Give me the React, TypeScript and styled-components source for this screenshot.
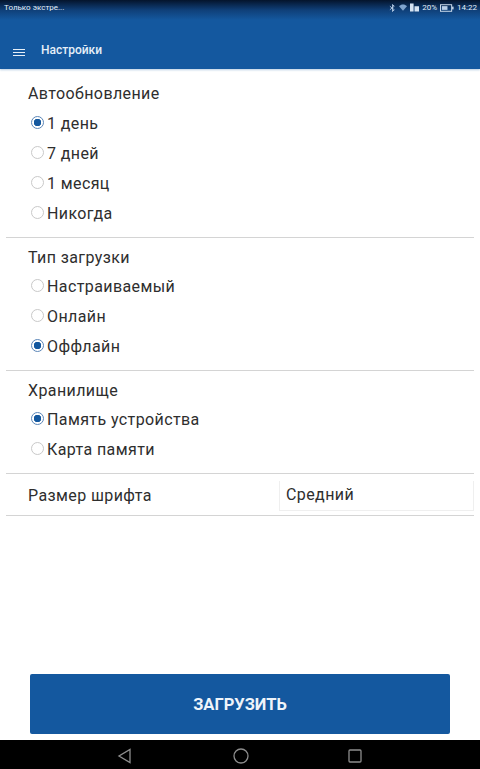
import styled, { createGlobalStyle } from 'styled-components';

const BLUE = '#14589f';

const GlobalStyle = createGlobalStyle`
  html, body {
    margin: 0;
    padding: 0;
    background: #fff;
  }
  * {
    box-sizing: border-box;
  }
`;

type Option = { label: string; checked?: boolean };

const SECTIONS: { title: string; options: Option[] }[] = [
  {
    title: 'Автообновление',
    options: [{ label: '1 день', checked: true }, { label: '7 дней' }, { label: '1 месяц' }, { label: 'Никогда' }],
  },
  {
    title: 'Тип загрузки',
    options: [{ label: 'Настраиваемый' }, { label: 'Онлайн' }, { label: 'Оффлайн', checked: true }],
  },
  {
    title: 'Хранилище',
    options: [{ label: 'Память устройства', checked: true }, { label: 'Карта памяти' }],
  },
];

const App = () => {
  return (
    <S.Page>
      <GlobalStyle />
      <S.Header>
        <S.StatusBar>
          <S.StatusText>Только экстре...</S.StatusText>
          <S.StatusRight>
            <svg width="7" height="10" viewBox="0 0 8 10" fill="none" stroke="#b9cfe8" strokeWidth="1">
              <path d="M1 3l5 4-2 2V1l2 2-5 4" />
            </svg>
            <svg width="8" height="7" viewBox="0 0 10 8" fill="#7fa3cc">
              <path d="M0 2.5C3-.5 7-.5 10 2.5L5 8z" />
            </svg>
            <svg width="9" height="9" viewBox="0 0 10 9" fill="#d5e3f2">
              <path d="M0 0h4v9H0zM5 3h5v6H5z" />
            </svg>
            <S.StatusText>20%</S.StatusText>
            <svg width="14" height="8" viewBox="0 0 15 8" fill="none">
              <rect x="0.5" y="0.5" width="12" height="7" stroke="#d5e3f2" />
              <rect x="2" y="2" width="6" height="4" fill="#b9cfe8" />
              <rect x="13" y="2.5" width="1.5" height="3" fill="#d5e3f2" />
            </svg>
            <S.StatusText>14:22</S.StatusText>
          </S.StatusRight>
        </S.StatusBar>
        <S.Toolbar>
          <S.Burger>
            <span />
            <span />
            <span />
          </S.Burger>
          <S.ToolbarTitle>Настройки</S.ToolbarTitle>
        </S.Toolbar>
      </S.Header>

      <S.Content>
        {SECTIONS.map((section) => (
          <S.Section key={section.title}>
            <S.Title>{section.title}</S.Title>
            {section.options.map((option) => (
              <S.RadioRow key={option.label}>
                <S.Radio $checked={option.checked} />
                <S.Label>{option.label}</S.Label>
              </S.RadioRow>
            ))}
          </S.Section>
        ))}
        <S.FontRow>
          <S.Label>Размер шрифта</S.Label>
          <S.Select>
            <S.Label>Средний</S.Label>
          </S.Select>
        </S.FontRow>
      </S.Content>

      <S.Footer>
        <S.LoadButton>ЗАГРУЗИТЬ</S.LoadButton>
      </S.Footer>

      <S.NavBar>
        <svg width="16" height="16" viewBox="0 0 16 16" fill="none" stroke="#8d8d8d" strokeWidth="1.3">
          <path d="M13 1.5v13L2 8z" />
        </svg>
        <svg width="16" height="16" viewBox="0 0 16 16" fill="none" stroke="#8d8d8d" strokeWidth="1.3">
          <circle cx="8" cy="8" r="7" />
        </svg>
        <svg width="14" height="14" viewBox="0 0 14 14" fill="none" stroke="#8d8d8d" strokeWidth="1.3">
          <rect x="1" y="1" width="12" height="12" rx="1" />
        </svg>
      </S.NavBar>
    </S.Page>
  );
};
export default App;

const S = {
  Page: styled.div`
    width: 480px;
    height: 769px;
    display: flex;
    flex-direction: column;
    background: #fff;
    font-family: Roboto, 'Liberation Sans', sans-serif;
    overflow: hidden;
  `,
  Header: styled.div`
    height: 69px;
    background: linear-gradient(180deg, #04142c 0px, #0f3f78 10px, ${BLUE} 20px);
    box-shadow: 0 1px 2px rgba(20, 88, 159, 0.3);
  `,
  StatusBar: styled.div`
    height: 16px;
    padding: 0 3px 1px 4px;
    display: flex;
    align-items: center;
    justify-content: space-between;
  `,
  StatusText: styled.span`
    font-size: 8px;
    color: #e4eef8;
  `,
  StatusRight: styled.div`
    display: flex;
    align-items: center;
    gap: 3px;
  `,
  Toolbar: styled.div`
    height: 53px;
    padding: 15px 0 0 13px;
    display: flex;
    align-items: center;
    gap: 16px;
  `,
  Burger: styled.div`
    width: 12px;
    margin-top: 5px;
    display: flex;
    flex-direction: column;
    gap: 1.5px;

    span {
      height: 1.5px;
      background: #e6eff8;
    }
  `,
  ToolbarTitle: styled.span`
    font-size: 12px;
    font-weight: 500;
    color: #e6eff8;
  `,
  Content: styled.div`
    flex: 1;
    padding: 0 6px;
  `,
  Section: styled.div`
    padding: 15px 0 9px 22px;
    border-bottom: 1px solid #d4d4d4;

    & + & {
      padding-top: 9.5px;
    }
    & + & > :first-child {
      margin-bottom: 3.5px;
    }
  `,
  Title: styled.div`
    margin-bottom: 4px;
    font-size: 16px;
    line-height: 20px;
    letter-spacing: 0.4px;
    color: #2e2e2e;
  `,
  Label: styled.span`
    font-size: 16px;
    line-height: 20px;
    letter-spacing: 0.4px;
    color: #2e2e2e;
  `,
  RadioRow: styled.div`
    height: 30px;
    padding-top: 2px;
    display: flex;
    align-items: center;
    gap: 3px;
  `,
  Radio: styled.span<{ $checked?: boolean }>`
    width: 13px;
    height: 13px;
    margin-left: 3px;
    margin-bottom: 3px;
    border-radius: 50%;
    border: 1.5px solid ${(p) => (p.$checked ? '#5b86b8' : '#c9c9c9')};
    background: ${(p) => (p.$checked ? `radial-gradient(circle, ${BLUE} 0 3.5px, #fff 4px)` : '#fff')};
  `,
  FontRow: styled.div`
    height: 42px;
    padding: 2px 0 0 22px;
    display: flex;
    align-items: center;
    justify-content: space-between;
    border-bottom: 1px solid #d4d4d4;
  `,
  Select: styled.div`
    width: 195px;
    height: 30px;
    padding-left: 6px;
    display: flex;
    align-items: center;
    border-left: 1px solid #efefef;
    border-bottom: 1px solid #efefef;
    border-right: 1px solid #efefef;
  `,
  Footer: styled.div`
    padding: 0 30px 6px;
  `,
  LoadButton: styled.button`
    width: 100%;
    height: 60px;
    border: none;
    border-radius: 2px;
    background: ${BLUE};
    color: #eef4fa;
    font-family: Roboto, 'Liberation Sans', sans-serif;
    font-size: 16.5px;
    font-weight: 700;
  `,
  NavBar: styled.div`
    height: 29px;
    padding: 2px 118px 0 117px;
    background: #000;
    display: flex;
    align-items: center;
    justify-content: space-between;
  `,
};
